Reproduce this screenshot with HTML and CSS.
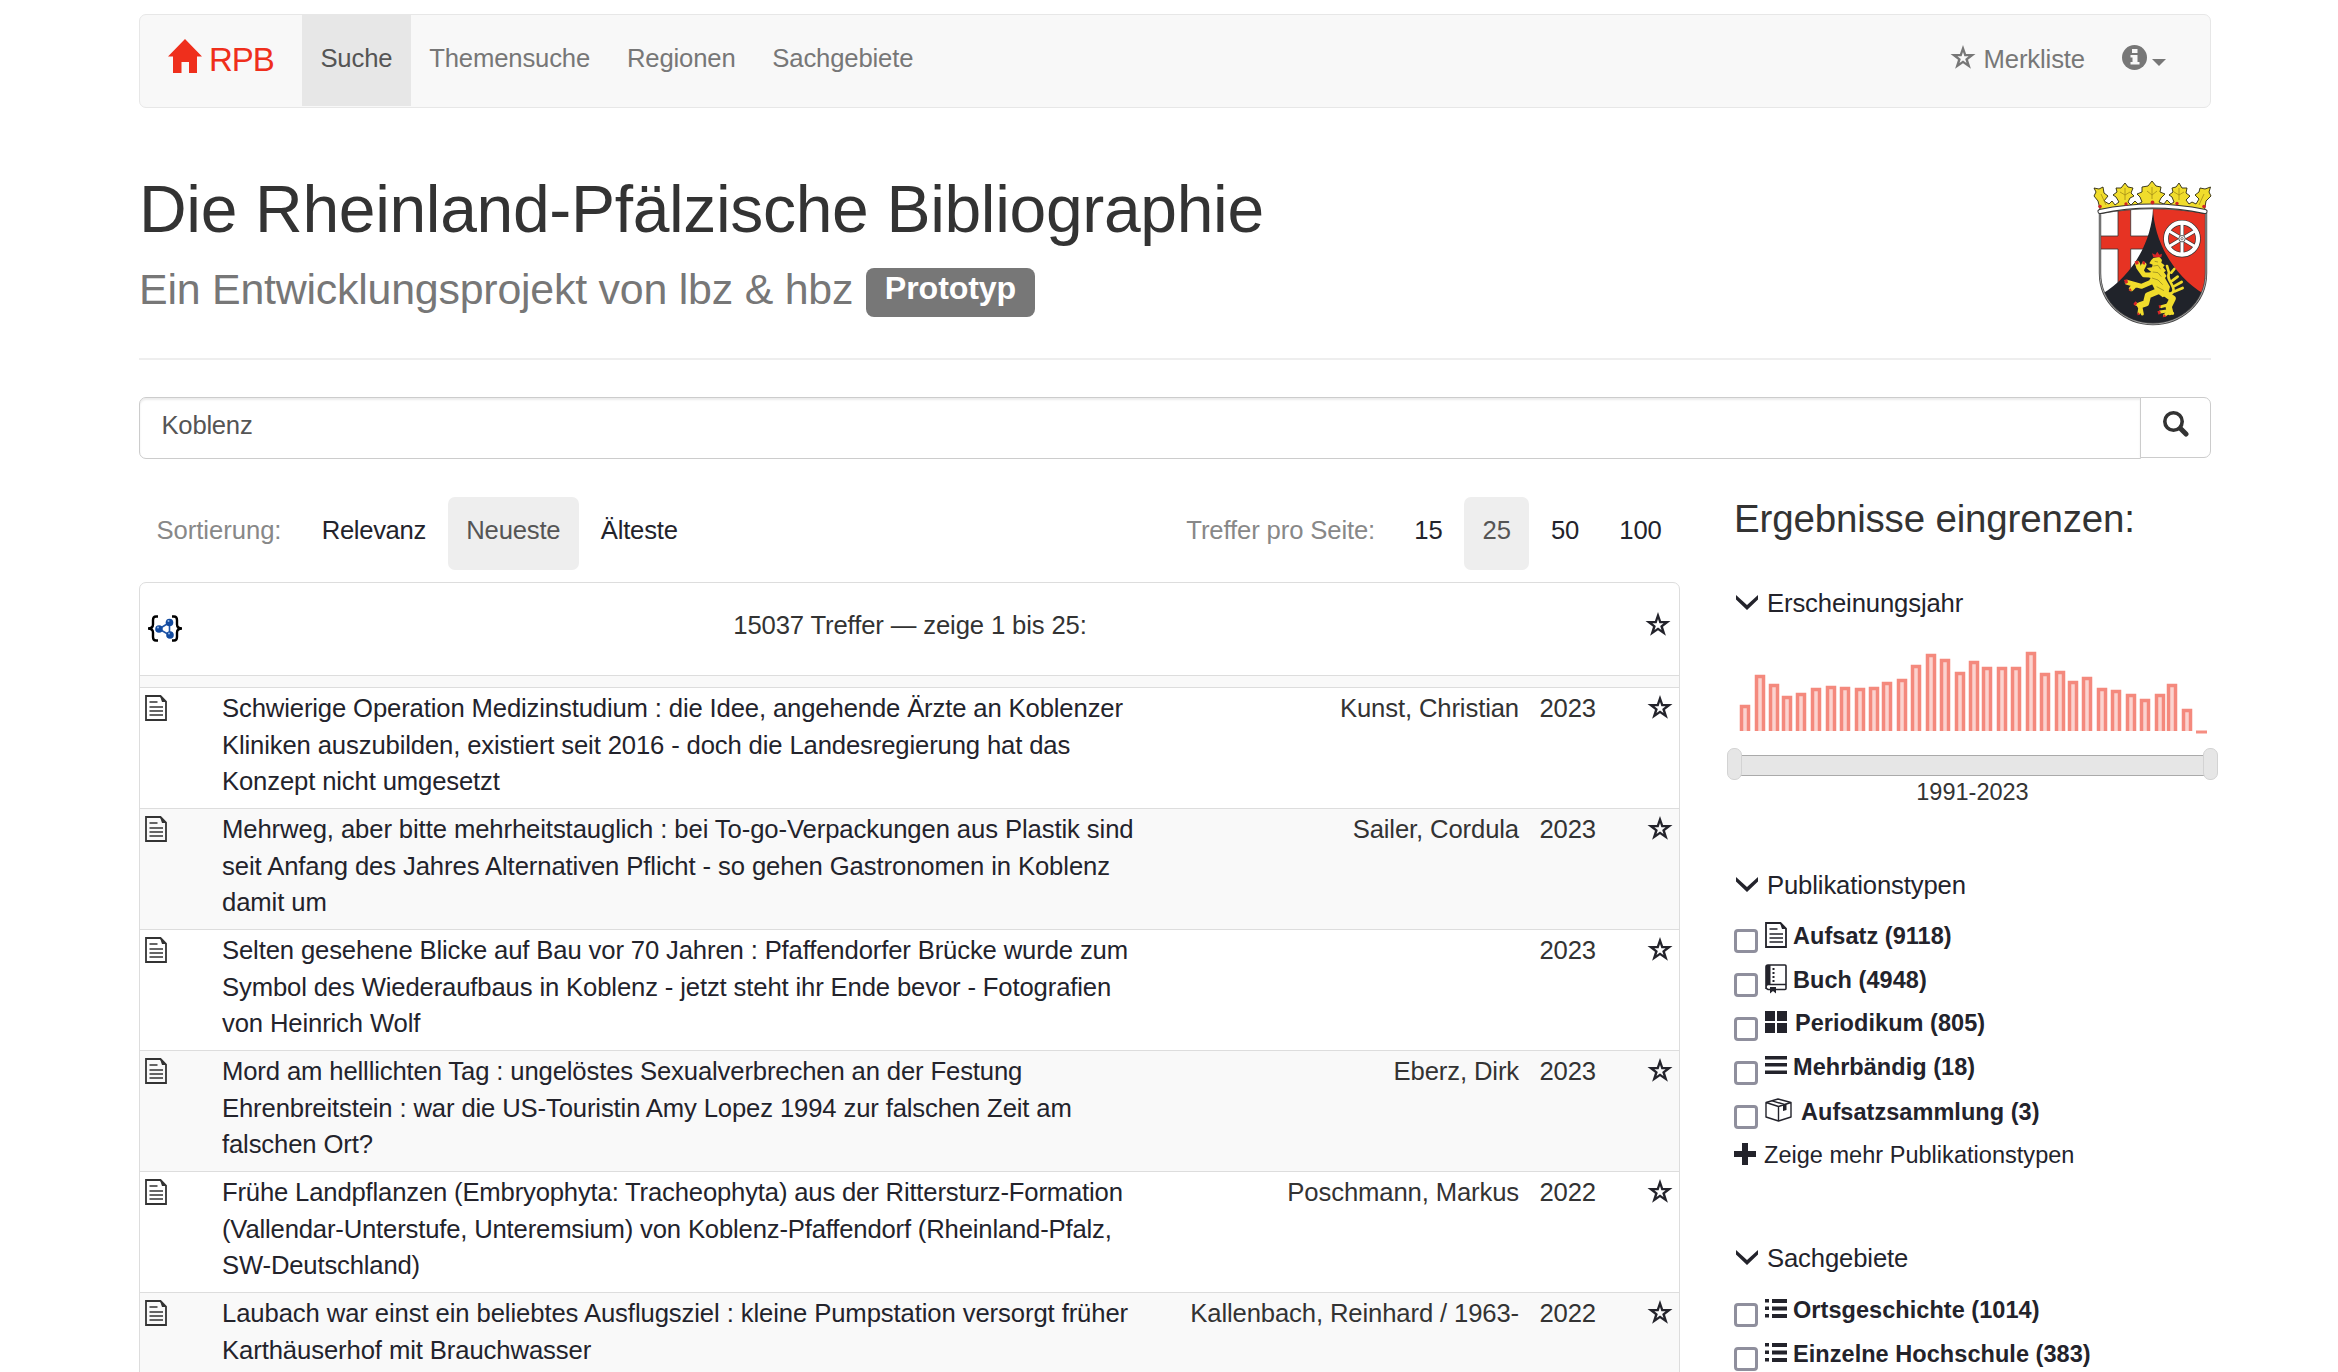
FILE: index.html
```html
<!DOCTYPE html>
<html lang="de">
<head>
<meta charset="utf-8">
<title>RPB</title>
<link rel="stylesheet" href="styles.css">
</head>
<body>
<svg class="defs" width="0" height="0">
  <defs>
    <symbol id="star" viewBox="0 0 26 24"><path fill="currentColor" fill-rule="evenodd" d="M13 0 16.100 9H25.500L18 14.800 20.900 23.700 13 18.300 5.100 23.700 8 14.800.5 9H9.900ZM13 7 11.600 11.300H7.400L10.800 14 9.500 17.900 13 15.500 16.500 17.900 15.200 14 18.600 11.300H14.400Z"/></symbol>
    <symbol id="doc" viewBox="0 0 22 26"><path fill="none" stroke="currentColor" stroke-width="1.800" d="M1 1H15.500L21 6.500V25H1Z"/><path fill="none" stroke="currentColor" stroke-width="1.500" d="M4.500 7H12.500M4.500 12H18M4.500 16H18M4.500 20H18"/><path fill="currentColor" d="M15 1 21 7H17Z"/></symbol>
    <symbol id="chev" viewBox="0 0 22 16"><path fill="currentColor" d="M0 0 11 10 22 0V4.500L11 15 0 4.500Z"/></symbol>
    <symbol id="list" viewBox="0 0 22 19"><path fill="currentColor" d="M0 0H4V3.500H0ZM7 0H22V4H7ZM0 7.500H4V11H0ZM7 7.500H22V11.500H7ZM0 15H4V18.500H0ZM7 15H22V19H7Z"/></symbol>
  </defs>
</svg>
<div class="container">
  <nav class="navbar">
    <a class="brand"><svg width="34" height="34" viewBox="0 0 34 34"><path fill="currentColor" d="M17 0 34 17.500H29V34H21V23H13.500V34H5V17.500H0Z"/></svg><span>RPB</span></a>
    <a class="nav-item active">Suche</a>
    <a class="nav-item">Themensuche</a>
    <a class="nav-item">Regionen</a>
    <a class="nav-item">Sachgebiete</a>
    <div class="nav-right">
      <a class="merk"><svg class="star"><use href="#star"/></svg><span>Merkliste</span></a>
      <svg class="info" width="25" height="25" viewBox="0 0 25 25"><circle cx="12.500" cy="12.500" r="12.500" fill="#777"/><path fill="#f8f8f8" d="M10 4H15.500V8H10ZM8.500 10H15.500V17H17.500V19.500H8.500V17H10.500V12.500H8.500Z"/></svg>
      <i class="caret"></i>
    </div>
  </nav>

  <header class="page-header">
    <div>
      <h1>Die Rheinland-Pfälzische Bibliographie</h1>
      <div class="sub"><span class="subtext">Ein Entwicklungsprojekt von lbz &amp; hbz</span><span class="badge">Prototyp</span></div>
    </div>
    <svg class="crest" width="120" height="147" viewBox="0 0 120 147">
      <defs><clipPath id="shield"><path d="M8 33Q61 23 114 33V93C114 124 88 144 61 144S8 124 8 93Z"/></clipPath></defs>
      <path fill="#fff" d="M8 33Q61 23 114 33V93C114 124 88 144 61 144S8 124 8 93Z"/>
      <g clip-path="url(#shield)">
        <path fill="#e63323" stroke="#333" stroke-width=".8" d="M26 20H38.700V56H65V69H38.700V130H26V69H5V56H26Z"/>
        <path fill="#e63323" d="M61 20H116V125H61Z"/>
        <path fill="#20232a" d="M61 28C62 62 82 96 112 114V147H10V114C40 96 60 62 61 28Z"/>
      </g>
      <path fill="none" stroke="#444" stroke-width="2.400" d="M8 33Q61 23 114 33V93C114 124 88 144 61 144S8 124 8 93Z"/>
      <path fill="none" stroke="#bbb" stroke-width=".8" d="M8 33Q61 23 114 33V93C114 124 88 144 61 144S8 124 8 93Z"/>
      <g fill="none">
        <circle cx="90" cy="58.700" r="16" stroke="#333" stroke-width="5.600"/>
        <path stroke="#333" stroke-width="4.200" d="M90 44V74M77 51 103 66.500M77 66.500 103 51"/>
        <circle cx="90" cy="58.700" r="16" stroke="#fff" stroke-width="4.200"/>
        <path stroke="#fff" stroke-width="3" d="M90 44V74M77 51 103 66.500M77 66.500 103 51"/>
        <circle cx="90" cy="58.700" r="3.200" fill="#fff" stroke="#333" stroke-width=".8"/>
        <circle cx="90" cy="58.700" r="1.200" stroke="#333" stroke-width=".6"/>
      </g>
      <path fill="#f0dc2c" stroke="#2b2810" stroke-width=".9" stroke-linejoin="round" d="M9 33 6 21 2 16 4 12 2 8 7 9 11 7 12 13 16 16 12 21 17 24 20 21 23 25 27 22 24 17 21 15 25 12 24 8 29 8 33 3 36 7 41 8 39 13 42 16 38 18 36 22 39 25 43 21 46 24 50 22 48 17 45 14 50 12 50 7 56 6 60 1 64 6 69 7 68 12 73 14 69 18 67 22 72 24 75 20 79 24 82 22 80 17 77 15 81 12 80 8 84 7 87 3 90 8 95 8 94 13 98 16 94 20 97 24 100 22 104 24 107 19 103 15 107 12 108 8 113 9 118.500 7 117 12 119 16 114 21 112 33Q60 21 9 33Z"/>
      <path fill="none" stroke="#a38d18" stroke-width=".8" d="M60 7V19M55 11 60 15 65 11M33 8V20M28 12 33 15 38 12M87 8V20M82 12 87 15 92 12M9 14 14 25M112 14 107 25"/>
      <path fill="none" stroke="#333" stroke-width="5" stroke-linecap="round" d="M8 31.500Q60 20.500 113 31.500"/>
      <path fill="none" stroke="#fff" stroke-width="3.200" stroke-linecap="round" d="M8 31.500Q60 20.500 113 31.500"/>
      <g fill="#cf2626"><circle cx="8" cy="26.500" r="1.800"/><circle cx="34" cy="24" r="1.700"/><circle cx="60.500" cy="22.500" r="1.900"/><circle cx="85" cy="23.500" r="1.700"/><circle cx="112" cy="26.500" r="1.800"/></g>
      <g transform="translate(-2 -2) scale(.3333)">
        <g fill="none" stroke="#f0dc2c" stroke-linecap="round" stroke-linejoin="round">
          <path stroke-width="8" d="M222 342C238 352 256 347 249 328C242 308 230 302 237 284L231 264M244 284 253 273M247 308 263 296M250 326 275 312M255 340 278 330"/>
          <path stroke-width="15" d="M195 292 162 290 146 268M144 262 142 256M156 272 162 260M190 310 155 325 112 313M132 324 124 332"/>
          <path stroke-width="19" d="M208 338 174 352 168 376 150 382M226 346 248 362 236 386 240 402"/>
          <path stroke-width="9" d="M150 382 138 378M150 384 147 405M153 388 157 408M236 380 214 386M236 398 210 402M238 402 224 412M242 402 248 406"/>
        </g>
        <path fill="#f0dc2c" d="M190 240 208 236 216 246 214 254 224 262 219 268 228 278 222 283 230 294 225 300 240 326 234 350 218 358 198 342 186 318 178 306 182 300 172 295 176 286 184 282 176 276 170 270 186 268 188 260 178 256 184 246Z"/>
        <path fill="none" stroke="#857a20" stroke-width="2" d="M194 250 204 252M190 264 204 262 212 274M188 282 204 284 214 296M186 300 204 306 218 320M200 326 222 338"/>
        <path fill="#d82626" d="M190 238 186 226 196 230 202 221 208 230 216 227 214 238ZM137 260 134 250 145 248 146 258ZM157 258 158 248 166 252 164 260ZM106 318 102 306 112 304 114 314ZM116 338 120 330 126 338ZM136 384 130 378 136 370 142 376ZM142 412 144 402 151 410ZM206 410 202 400 210 398 213 406ZM218 418 222 408 230 416ZM208 392 206 382 214 382Z"/>
      </g>
    </svg>
  </header>

  <div class="search"><div class="field">Koblenz</div><div class="go"><svg width="26" height="26" viewBox="0 0 26 26"><circle cx="10.500" cy="10.500" r="8.700" fill="none" stroke="#333" stroke-width="3.600"/><path stroke="#333" stroke-width="5" stroke-linecap="round" d="M17.500 17.500 23 23"/></svg></div></div>

  <div class="columns">
    <main>
      <div class="tools">
        <span class="pill mute">Sortierung:</span><span class="pill tight">Relevanz</span><span class="pill on">Neueste</span><span class="pill">Älteste</span>
        <span class="spacer"></span>
        <div class="perpage"><span class="pill mute">Treffer pro Seite:</span><span class="pill">15</span><span class="pill on">25</span><span class="pill">50</span><span class="pill">100</span></div>
      </div>
      <div class="table">
        <div class="thead">
          <svg width="36" height="28" viewBox="0 0 36 28"><path fill="none" stroke="#000" stroke-width="2.400" d="M11 1.500H9Q6 1.500 6 5V9.500Q6 13.500 1 13.500Q6 13.500 6 17.500V22Q6 25.500 9 25.500H11M25 1.500H27Q30 1.500 30 5V9.500Q30 13.500 35 13.500Q30 13.500 30 17.500V22Q30 25.500 27 25.500H25"/><path fill="none" stroke="#1f55a8" stroke-width="1.600" d="M12 14 22.500 7.500V20Z"/><g fill="#134ba0"><circle cx="12" cy="14" r="3.800"/><circle cx="22.500" cy="7.500" r="3.800"/><circle cx="23" cy="20" r="3.800"/></g><g fill="#8fb4e6"><circle cx="11" cy="12.500" r="1"/><circle cx="21.500" cy="6" r="1"/><circle cx="22" cy="18.500" r="1"/></g></svg>
          <span class="count">15037 Treffer — zeige 1 bis 25:</span>
          <svg class="star"><use href="#star"/></svg>
        </div>
        <div class="stripe"></div>
        <div class="row"><svg class="doc"><use href="#doc"/></svg><div class="title">Schwierige Operation Medizinstudium : die Idee, angehende Ärzte an Koblenzer<br>Kliniken auszubilden, existiert seit 2016 - doch die Landesregierung hat das<br>Konzept nicht umgesetzt</div><div class="author">Kunst, Christian</div><div class="year">2023</div><svg class="star"><use href="#star"/></svg></div>
        <div class="row odd"><svg class="doc"><use href="#doc"/></svg><div class="title loose">Mehrweg, aber bitte mehrheitstauglich : bei To-go-Verpackungen aus Plastik sind<br>seit Anfang des Jahres Alternativen Pflicht - so gehen Gastronomen in Koblenz<br>damit um</div><div class="author">Sailer, Cordula</div><div class="year">2023</div><svg class="star"><use href="#star"/></svg></div>
        <div class="row"><svg class="doc"><use href="#doc"/></svg><div class="title">Selten gesehene Blicke auf Bau vor 70 Jahren : Pfaffendorfer Brücke wurde zum<br>Symbol des Wiederaufbaus in Koblenz - jetzt steht ihr Ende bevor - Fotografien<br>von Heinrich Wolf</div><div class="author"></div><div class="year">2023</div><svg class="star"><use href="#star"/></svg></div>
        <div class="row odd"><svg class="doc"><use href="#doc"/></svg><div class="title">Mord am helllichten Tag : ungelöstes Sexualverbrechen an der Festung<br>Ehrenbreitstein : war die US-Touristin Amy Lopez 1994 zur falschen Zeit am<br>falschen Ort?</div><div class="author">Eberz, Dirk</div><div class="year">2023</div><svg class="star"><use href="#star"/></svg></div>
        <div class="row"><svg class="doc"><use href="#doc"/></svg><div class="title dense">Frühe Landpflanzen (Embryophyta: Tracheophyta) aus der Rittersturz-Formation<br>(Vallendar-Unterstufe, Unteremsium) von Koblenz-Pfaffendorf (Rheinland-Pfalz,<br>SW-Deutschland)</div><div class="author">Poschmann, Markus</div><div class="year">2022</div><svg class="star"><use href="#star"/></svg></div>
        <div class="row odd"><svg class="doc"><use href="#doc"/></svg><div class="title loose">Laubach war einst ein beliebtes Ausflugsziel : kleine Pumpstation versorgt früher<br>Karthäuserhof mit Brauchwasser</div><div class="author">Kallenbach, Reinhard / 1963-</div><div class="year">2022</div><svg class="star"><use href="#star"/></svg></div>
      </div>
    </main>

    <aside>
      <h2>Ergebnisse eingrenzen:</h2>
      <h3><svg class="chev"><use href="#chev"/></svg>Erscheinungsjahr</h3>
      <svg class="chart" width="477" height="90" viewBox="0 0 477 90">
        <g class="bars">
          <rect x="7.500" y="60.500" width="7" height="60"/><rect x="22.500" y="30.500" width="7" height="60"/><rect x="36.500" y="39.500" width="7" height="60"/><rect x="49.500" y="51.500" width="7" height="60"/><rect x="63.500" y="48.500" width="7" height="60"/><rect x="78.500" y="43.500" width="7" height="60"/><rect x="93.500" y="41.500" width="7" height="60"/><rect x="107.500" y="42.500" width="7" height="60"/><rect x="122.500" y="43.500" width="7" height="60"/><rect x="136.500" y="42.500" width="7" height="60"/><rect x="149.500" y="37.500" width="7" height="60"/><rect x="164.500" y="34.500" width="7" height="60"/><rect x="178.500" y="20.500" width="7" height="80"/><rect x="193.500" y="9.500" width="7" height="90"/><rect x="207.500" y="14.500" width="7" height="80"/><rect x="222.500" y="27.500" width="7" height="80"/><rect x="236.500" y="16.500" width="7" height="80"/><rect x="249.500" y="22.500" width="7" height="80"/><rect x="264.500" y="22.500" width="7" height="80"/><rect x="278.500" y="22.500" width="7" height="80"/><rect x="293.500" y="7.500" width="7" height="90"/><rect x="307.500" y="28.500" width="7" height="80"/><rect x="322.500" y="26.500" width="7" height="80"/><rect x="335.500" y="36.500" width="7" height="80"/><rect x="349.500" y="32.500" width="7" height="80"/><rect x="364.500" y="43.500" width="7" height="80"/><rect x="378.500" y="45.500" width="7" height="80"/><rect x="393.500" y="49.500" width="7" height="80"/><rect x="407.500" y="54.500" width="7" height="80"/><rect x="422.500" y="49.500" width="7" height="80"/><rect x="434.500" y="39.500" width="7" height="80"/><rect x="449.500" y="64.500" width="7" height="80"/>
        </g>
        <path fill="#fff" d="M0 85H477V90H0Z"/>
        <path fill="#f58d81" d="M462 84.500H473V87.500H462Z"/>
      </svg>
      <div class="slider"><i></i><i></i></div>
      <div class="range">1991-2023</div>

      <h3 class="pub"><svg class="chev"><use href="#chev"/></svg>Publikationstypen</h3>
      <div class="facet"><i class="box"></i><svg width="22" height="26"><use href="#doc"/></svg><b>Aufsatz (9118)</b></div>
      <div class="facet buch"><i class="box"></i><svg width="22" height="30" viewBox="0 0 22 30"><path fill="none" stroke="currentColor" stroke-width="1.600" d="M1 25V3Q1 1 3 1H20Q21 1 21 2V20.500H3Q1 21 1 23T3 25.500H20Q21 25.500 21 24.500V20"/><path fill="currentColor" d="M1 1H5.500V21H1ZM7.500 4H9.500V6H7.500ZM7.500 8H9.500V10H7.500ZM7.500 12H9.500V14H7.500ZM7.500 16H9.500V18H7.500ZM5 23H11V29.500L8 27 5 29.500Z"/></svg><b>Buch (4948)</b></div>
      <div class="facet peri"><i class="box"></i><svg width="22" height="22" viewBox="0 0 22 22"><path fill="currentColor" d="M0 0H10V10H0ZM12 0H22V10H12ZM0 12H10V22H0ZM12 12H22V22H12Z"/></svg><b>Periodikum (805)</b></div>
      <div class="facet mehr"><i class="box"></i><svg width="22" height="18" viewBox="0 0 22 18"><path fill="currentColor" d="M0 0H22V3.500H0ZM0 7H22V10.500H0ZM0 14.500H22V18H0Z"/></svg><b>Mehrbändig (18)</b></div>
      <div class="facet sammlung"><i class="box"></i><svg width="27" height="24" viewBox="0 0 27 24"><path fill="none" stroke="currentColor" stroke-width="1.400" stroke-linejoin="round" d="M1 4.500 13 1 26 4.500 13.500 8.500ZM1 4.500V19L13.500 23 26 19V4.500M13.500 8.500V23M7 2.800 19.500 6.500"/><path fill="currentColor" d="M18 6.500 21.500 5.500V12L18 13Z"/></svg><b>Aufsatzsammlung (3)</b></div>
      <div class="more"><svg width="22" height="22" viewBox="0 0 22 22"><path fill="currentColor" d="M8 0H14V8H22V14H14V22H8V14H0V8H8Z"/></svg>Zeige mehr Publikationstypen</div>

      <h3 class="sach"><svg class="chev"><use href="#chev"/></svg>Sachgebiete</h3>
      <div class="facet li"><i class="box"></i><svg width="22" height="19"><use href="#list"/></svg><b>Ortsgeschichte (1014)</b></div>
      <div class="facet li"><i class="box"></i><svg width="22" height="19"><use href="#list"/></svg><b>Einzelne Hochschule (383)</b></div>
    </aside>
  </div>
</div>
</body>
</html>
```
FILE: styles.css
```css
* { box-sizing: border-box; }
html, body { height: 1372px; overflow: hidden; }
body {
  margin: 0;
  background: #fff;
  color: #333;
  font: 25.67px/36.67px "Liberation Sans", Arial, sans-serif;
  letter-spacing: -0.13px;
  white-space: nowrap;
}
svg { flex: none; display: block; }
.defs { position: absolute; }
.container { width: 2072px; margin-left: 139px; padding-top: 14px; }

.navbar { display: flex; height: 94px; background: #f8f8f8; border: 1px solid #e7e7e7; border-radius: 7px; color: #777; }
.brand { display: flex; width: 162px; padding: 24px 0 0 28px; color: #ef2f1c; font-size: 33px; gap: 7px; letter-spacing: -1px; }
.brand span { padding-top: 3px; }
.nav-item { padding: 25px 18.4px 0; height: 91px; letter-spacing: -0.15px; }
.active { background: #e7e7e7; color: #555; }
.nav-right { margin-left: auto; display: flex; padding: 26px 44px 0 0; }
.merk { display: flex; gap: 8px; margin-right: 37px; }
.star { width: 26px; height: 24px; color: #23232b; }
.merk .star { color: #777; margin-top: 4px; }
.info { margin-top: 4px; }
.caret { margin: 18px 0 0 5px; width: 0; height: 0; border: 7px solid transparent; border-top-color: #777; border-bottom: 0; }

.page-header { display: flex; justify-content: space-between; height: 252px; border-bottom: 2px solid #eee; }
h1, h2, h3 { margin: 0; font-weight: 400; }
h1 { padding-top: 65px; font-size: 66px; line-height: 72px; letter-spacing: -0.33px; }
.sub { display: flex; margin-top: 23px; font-size: 42.9px; line-height: 48px; color: #777; }
.subtext { margin-top: -3px; width: 727px; letter-spacing: -0.22px; }
.badge { height: 49px; width: 169px; background: #777; color: #fff; border-radius: 8px; font-size: 32.2px; font-weight: 700; line-height: 40px; text-align: center; }
.crest { margin-top: 72px; margin-right: -1px; }

.search { display: flex; margin-top: 37px; height: 62px; }
.field { flex: 1; border: 1px solid #ccc; border-radius: 7px 0 0 7px; box-shadow: inset 0 2px 2px rgba(0,0,0,.075); color: #555; padding: 9px 21.5px; letter-spacing: -0.25px; }
.go { width: 71px; height: 61px; margin-left: -1px; border: 1px solid #ccc; border-radius: 0 7px 7px 0; padding: 13px 0 0 22px; background: #fff; }

.columns { display: flex; justify-content: space-between; }
main { width: 1541px; padding-top: 38px; }
.tools { display: flex; height: 73px; }
.perpage { display: flex; }
.pill { height: 73px; padding: 15px 18.33px 0; border-radius: 7px; color: #23232b; margin-right: 3.67px; letter-spacing: -0.2px; }
.pill.tight { letter-spacing: -0.35px; }
.tools > .mute { padding-left: 17.5px; letter-spacing: -0.05px; }
.perpage .pill { margin-right: 3.4px; letter-spacing: -0.13px; }
.perpage .mute { margin-right: 2.5px; }
.perpage .pill:last-child { margin-right: 0; }
.tools .mute { color: #888; }
.pill.on { background: #eee; color: #555; }
.spacer { flex: 1; }
.table { margin-top: 12px; border: 1px solid #ddd; border-radius: 7px 7px 0 0; }
.thead { display: flex; justify-content: space-between; height: 92px; padding: 24px 8px 0 7px; }
.thead > svg:first-child { margin-top: 8px; }
.thead .star { margin-top: 5px; }
.count { margin-right: 8px; }
.stripe { height: 12px; border-top: 1px solid #ddd; background: #f9f9f9; }
.row { display: flex; height: 121px; border-top: 1px solid #ddd; padding: 2px 7px 0 5px; }
.odd { background: #f9f9f9; }
.doc { width: 22px; height: 26px; margin: 5px 55px 0 0; color: #333; }
.title { width: 920px; color: #23232b; letter-spacing: -0.138px; }
.title.loose { letter-spacing: -0.1px; }
.title.dense { letter-spacing: -0.175px; }
.author { flex: 1; text-align: right; }
.year { width: 77px; text-align: right; margin-right: 50px; }
.row .star { margin: 5px -1px 0 1px; }

aside { width: 477px; color: #23232b; }
h2 { padding: 35px 0 2px; font-size: 38.5px; line-height: 50px; color: #333; letter-spacing: -0.17px; }
h3 { display: flex; height: 37px; font-size: 25.67px; }
aside h3 { margin-top: 39px; }
.chev { width: 22px; height: 16px; margin: 10px 9px 0 2px; }
.chart { margin-top: 24px; }
.bars rect { fill: #fbd3cf; stroke: #f4897d; stroke-width: 3.500px; }
.slider { display: flex; justify-content: space-between; height: 21px; margin-top: 19px; border: solid #aaa; border-width: 1px 0; background: #e6e6e6; }
.slider i { width: 15px; height: 32px; margin: -8px -7px 0; border: 1px solid #d3d3d3; border-radius: 7px; background: #e6e6e6; }
.range { height: 37px; text-align: center; font-size: 23.5px; margin-top: -2px; color: #333; letter-spacing: 0; }
aside h3.pub { margin-top: 56px; }
.facet { display: flex; height: 44px; font-size: 23.5px; letter-spacing: 0.05px; }
.box { width: 24px; height: 24px; margin: 14px 7px 0 0; border: 3px solid #8f8f9d; border-radius: 4px; }
.facet svg { margin-top: 7px; }
.facet b { margin-left: 6px; padding-top: 3px; }
aside .pub + .facet { margin-top: 11px; }
.facet.buch svg { margin-top: 5px; }
.facet.peri svg { margin-top: 8px; }
.facet.peri b { margin-left: 8px; padding-top: 2px; }
.facet.mehr svg { margin-top: 9px; }
.facet.mehr b { padding-top: 2px; }
.facet.sammlung b { margin-left: 9px; }
.more { display: flex; gap: 8px; font-size: 23.5px; padding-top: 2px; letter-spacing: 0.03px; }
.more svg { margin-top: 6px; }
aside h3.sach { margin-top: 66px; }
.facet.li svg { margin-top: 10px; }
.sach + .facet { margin-top: 12px; }
```
